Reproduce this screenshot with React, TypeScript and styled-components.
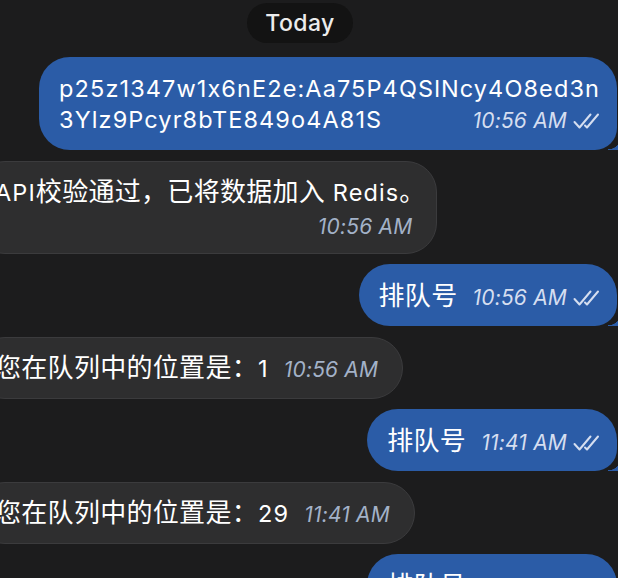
import React from "react";
import styled, { createGlobalStyle, css } from "styled-components";

const Global = createGlobalStyle`
  html, body { margin: 0; padding: 0; background: #1c1c1d; overflow: hidden; }
  body {
    font-family: "Inter", "Noto Sans CJK SC", sans-serif;
    color: #fff;
    font-feature-settings: "calt" 0;
  }
`;

const Chat = styled.div`
  width: 618px;
  height: 578px;
  overflow: hidden;
  display: flex;
  flex-direction: column;
  padding-top: 3px;
  box-sizing: border-box;
`;

const DayPill = styled.div`
  align-self: center;
  height: 40px;
  padding: 0 18px;
  margin-right: 18px;
  border-radius: 20px;
  background: #131313;
  color: #ececec;
  font-size: 23px;
  line-height: 40px;
  font-weight: 500;
  letter-spacing: 0.4px;
  margin-bottom: 14px;
`;

const Messages = styled.div`
  display: flex;
  flex-direction: column;
  gap: 10.5px;
`;

const Bubble = styled.div<{ $out?: boolean }>`
  position: relative;
  width: fit-content;
  box-sizing: border-box;
  border-radius: 31px;
  padding: 15.5px 0;
  font-size: 23.5px;
  letter-spacing: 1.1px;
  line-height: 31px;
  ${(p) =>
    p.$out
      ? css`
          align-self: flex-end;
          margin-right: 1px;
          padding-left: 20px;
          padding-right: 17px;
          background: #2b5ca7;
          border-bottom-right-radius: 22px;
          &::after {
            content: "";
            position: absolute;
            right: -7px;
            bottom: 0;
            width: 16px;
            height: 14px;
            background: radial-gradient(circle at 0 0, transparent 13px, #2b5ca7 13.5px);
            border-bottom-right-radius: 2px;
          }
        `
      : css`
          align-self: flex-start;
          margin-left: -26px;
          padding-left: 20px;
          padding-right: 24px;
          background: #2e2e2f;
          border: 1px solid #3b3b3d;
          padding-top: 14.5px;
          padding-bottom: 14.5px;
        `}
`;

const Row = styled.div<{ $end?: boolean }>`
  display: flex;
  align-items: baseline;
  justify-content: ${(p) => (p.$end ? "flex-end" : "space-between")};
  gap: 15px;
  white-space: nowrap;
  height: 31px;
  line-height: 31px;
  ${(p) =>
    p.$end &&
    css`
      margin-top: 4px;
      margin-bottom: -4px;
    `}
`;

const Han = styled.span<{ $half?: boolean }>`
  font-size: 26px;
  letter-spacing: ${(p) => (p.$half ? "0" : "0.3px")};
  line-height: 31px;
  font-feature-settings: ${(p) => (p.$half ? '"halt" 1' : "normal")};
`;

const Meta = styled.span<{ $out?: boolean }>`
  display: inline-flex;
  align-items: baseline;
  gap: 6px;
  font-size: 21px;
  letter-spacing: 0.2px;
  font-style: italic;
  line-height: 31px;
  color: ${(p) => (p.$out ? "#d5def0" : "#a3b2c8")};
`;

const Ticks = styled.svg`
  width: 27px;
  height: 16px;
  align-self: center;
  position: relative;
  top: 1px;
`;

const DoubleCheck = () => (
  <Ticks viewBox="0 0 27 16" fill="none" stroke="#d5def0" strokeWidth={2} strokeLinecap="round" strokeLinejoin="round">
    <path d="M1.5 9 L6.5 14.5 L17.5 1.5" />
    <path d="M12 12.5 L14 14.5 L25 1.5" />
  </Ticks>
);

const Time = ({ t, out }: { t: string; out?: boolean }) => (
  <Meta $out={out}>
    {t}
    {out && <DoubleCheck />}
  </Meta>
);

export default function App() {
  return (
    <Chat>
      <Global />
      <DayPill>Today</DayPill>
      <Messages>
        <Bubble $out>
          <Row>p25z1347w1x6nE2e:Aa75P4QSlNcy4O8ed3n</Row>
          <Row>
            <span>3Ylz9Pcyr8bTE849o4A81S</span>
            <Time t="10:56 AM" out />
          </Row>
        </Bubble>
        <Bubble>
          <Row>
            <span>
              API<Han>校验通过，已将数据加入</Han> Redis<Han $half>。</Han>
            </span>
          </Row>
          <Row $end>
            <Time t="10:56 AM" />
          </Row>
        </Bubble>
        <Bubble $out>
          <Row>
            <Han>排队号</Han>
            <Time t="10:56 AM" out />
          </Row>
        </Bubble>
        <Bubble>
          <Row>
            <span>
              <Han>您在队列中的位置是：</Han>1
            </span>
            <Time t="10:56 AM" />
          </Row>
        </Bubble>
        <Bubble $out>
          <Row>
            <Han>排队号</Han>
            <Time t="11:41 AM" out />
          </Row>
        </Bubble>
        <Bubble>
          <Row>
            <span>
              <Han>您在队列中的位置是：</Han>29
            </span>
            <Time t="11:41 AM" />
          </Row>
        </Bubble>
        <Bubble $out>
          <Row>
            <Han>排队号</Han>
            <Time t="11:41 AM" out />
          </Row>
        </Bubble>
      </Messages>
    </Chat>
  );
}
